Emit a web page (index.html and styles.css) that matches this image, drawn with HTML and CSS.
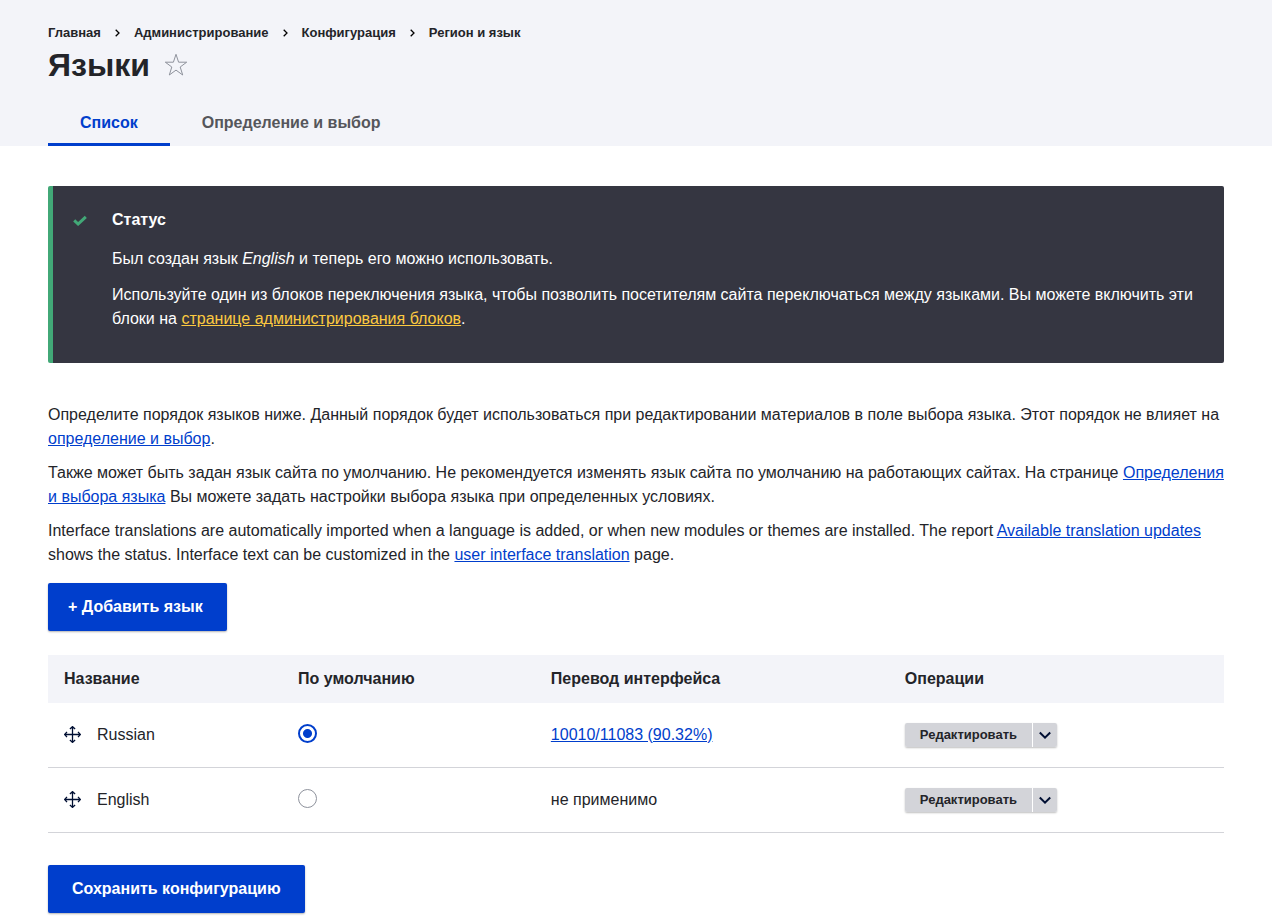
FILE: index.html
```html
<!DOCTYPE html>
<html lang="ru">
<head>
<meta charset="utf-8">
<meta name="viewport" content="width=device-width, initial-scale=1">
<title>Языки</title>
<link rel="stylesheet" href="styles.css">
</head>
<body>
<svg class="sprite" aria-hidden="true">
  <symbol id="icon-move" viewBox="0 0 17 17"><path d="M8.5 1V16M1 8.5H16M5.9 3 8.5.6 11.1 3M5.9 14 8.5 16.4 11.1 14M3 5.9.6 8.5 3 11.1M14 5.9 16.4 8.5 14 11.1"/></symbol>
  <symbol id="icon-down" viewBox="0 0 14 9"><path d="M1.8 1.5 7 6.7 12.2 1.5"/></symbol>
  <symbol id="icon-next" viewBox="0 0 5 8"><path d="M.7.7 4 4 .7 7.3"/></symbol>
</svg>
<header class="page-header">
  <nav aria-label="Строка навигации">
    <ol class="breadcrumb">
      <li><a href="#">Главная</a></li>
      <li><svg class="breadcrumb-arrow" aria-hidden="true"><use href="#icon-next"/></svg><a href="#">Администрирование</a></li>
      <li><svg class="breadcrumb-arrow" aria-hidden="true"><use href="#icon-next"/></svg><a href="#">Конфигурация</a></li>
      <li><svg class="breadcrumb-arrow" aria-hidden="true"><use href="#icon-next"/></svg><a href="#">Регион и язык</a></li>
    </ol>
  </nav>
  <div class="title-row">
    <h1>Языки</h1>
    <a class="shortcut" href="#" aria-label="Добавить в ярлыки"><svg viewBox="0 0 24 24"><path d="M12 1.3 14.6 9.2H22.7L16.2 14 18.7 22 12 17.1 5.3 22 7.8 14 1.3 9.2H9.4Z"/></svg></a>
  </div>
  <nav class="tabs" aria-label="Вкладки">
    <a class="tab tab-active" href="#" aria-current="page">Список</a>
    <a class="tab" href="#">Определение и выбор</a>
  </nav>
</header>
<main class="content">
  <section class="message" role="status">
    <svg class="message-icon" viewBox="0 0 14 11" aria-hidden="true"><path d="M1.2 5.4 5.1 9 12.8 1.8"/></svg>
    <div class="message-body">
      <h2>Статус</h2>
      <p>Был создан язык <em>English</em> и теперь его можно использовать.</p>
      <p>Используйте один из блоков переключения языка, чтобы позволить посетителям сайта переключаться между языками. Вы можете включить эти блоки на <a href="#">странице администрирования блоков</a>.</p>
    </div>
  </section>
  <div class="help">
    <p>Определите порядок языков ниже. Данный порядок будет использоваться при редактировании материалов в поле выбора языка. Этот порядок не влияет на <a href="#">определение и выбор</a>.</p>
    <p>Также может быть задан язык сайта по умолчанию. Не рекомендуется изменять язык сайта по умолчанию на работающих сайтах. На странице <a href="#">Определения и выбора языка</a> Вы можете задать настройки выбора языка при определенных условиях.</p>
    <p>Interface translations are automatically imported when a language is added, or when new modules or themes are installed. The report <a href="#">Available translation updates</a> shows the status. Interface text can be customized in the <a href="#">user interface translation</a> page.</p>
  </div>
  <a class="button button-add" href="#">+ Добавить язык</a>
  <form>
    <table class="languages">
      <colgroup><col class="col-name"><col class="col-default"><col class="col-translation"><col></colgroup>
      <thead>
        <tr><th scope="col">Название</th><th scope="col">По умолчанию</th><th scope="col">Перевод интерфейса</th><th scope="col">Операции</th></tr>
      </thead>
      <tbody>
        <tr>
          <td><div class="name"><a class="move" href="#" aria-label="Переместить"><svg><use href="#icon-move"/></svg></a><label for="default-ru">Russian</label></div></td>
          <td><input class="radio" type="radio" name="default" id="default-ru" checked></td>
          <td><a href="#">10010/11083 (90.32%)</a></td>
          <td><div class="dropbutton"><a class="dropbutton-action" href="#">Редактировать</a><button class="dropbutton-toggle" type="button" aria-label="Другие действия"><svg><use href="#icon-down"/></svg></button></div></td>
        </tr>
        <tr>
          <td><div class="name"><a class="move" href="#" aria-label="Переместить"><svg><use href="#icon-move"/></svg></a><label for="default-en">English</label></div></td>
          <td><input class="radio" type="radio" name="default" id="default-en"></td>
          <td>не применимо</td>
          <td><div class="dropbutton"><a class="dropbutton-action" href="#">Редактировать</a><button class="dropbutton-toggle" type="button" aria-label="Другие действия"><svg><use href="#icon-down"/></svg></button></div></td>
        </tr>
      </tbody>
    </table>
    <button class="button" type="submit">Сохранить конфигурацию</button>
  </form>
</main>
</body>
</html>
```
FILE: styles.css
```css
:root {
  --blue: #003ecc;
  --text: #232429;
  --pale: #f3f4f9;
  --navy: #000f33;
}
* { box-sizing: border-box; }
body {
  margin: 0;
  background: #fff;
  color: var(--text);
  font: 16px/24px "Liberation Sans", Arial, sans-serif;
}
a { color: var(--blue); }
h1, h2, p { margin: 0; }
svg { display: block; fill: none; stroke: currentColor; }
.sprite { display: none; }

.page-header { padding: 24px 48px 0; background: var(--pale); }
.breadcrumb {
  display: flex;
  flex-wrap: wrap;
  margin: 0;
  padding: 0;
  list-style: none;
  font-size: 13px;
  font-weight: 700;
  line-height: 18px;
}
.breadcrumb li { display: flex; align-items: center; }
.breadcrumb a { color: inherit; text-decoration: none; }
.breadcrumb-arrow { width: 5px; height: 8px; margin: 0 14px; color: #000; stroke-width: 1.3; }
.title-row { display: flex; align-items: center; gap: 14px; padding: 2px 0 13px; }
.title-row h1 { font-size: 32px; line-height: 42px; }
.shortcut { color: #8e929c; }
.shortcut svg { width: 24px; height: 24px; stroke-width: 1; }
.tabs { display: flex; }
.tab {
  padding: 12px 32px 8px;
  border-bottom: 3px solid transparent;
  color: #55565b;
  font-weight: 700;
  text-decoration: none;
}
.tab-active { border-color: var(--blue); color: var(--blue); }

.content { padding: 40px 48px 3px; }
.message {
  display: flex;
  gap: 25px;
  padding: 22px 24px 32px 20px;
  border-left: 5px solid #42a877;
  border-radius: 2px;
  background: #353641;
  color: #fff;
}
.message-icon { flex: none; width: 14px; height: 11px; margin-top: 7px; color: #42a877; stroke-width: 3; }
.message-body h2 { margin-bottom: 15px; font-size: 16px; line-height: 24px; }
.message-body p + p { margin-top: 12px; }
.message-body a { color: #fdca40; }

.help { display: grid; gap: 10px; margin: 40px 0 16px; }

.button {
  display: inline-block;
  padding: 12px 24px;
  border: 0;
  border-radius: 2px;
  background: var(--blue);
  box-shadow: 0 1px 2px rgba(0, 0, 0, .3);
  color: #fff;
  font: 700 16px/24px "Liberation Sans", Arial, sans-serif;
  text-decoration: none;
  vertical-align: top;
}
.button-add { padding-left: 20px; }

.languages {
  width: 100%;
  margin: 24px 0 32px;
  border-collapse: separate;
  border-spacing: 0;
  table-layout: fixed;
}
.col-name { width: 19.9%; }
.col-default { width: 21.5%; }
.col-translation { width: 30.1%; }
.languages th { height: 48px; padding: 0 16px; background: var(--pale); text-align: left; }
.languages td { height: 65px; padding: 0 16px; border-bottom: 1px solid #d3d4d9; }
.name { display: flex; align-items: center; gap: 16px; }
.move { padding-bottom: 2px; color: var(--navy); }
.move svg { width: 17px; height: 17px; stroke-width: 1.3; }
.radio {
  display: block;
  appearance: none;
  width: 19px;
  height: 19px;
  margin: 0 0 3px;
  border: 1px solid #8e929c;
  border-radius: 50%;
  background: #fff;
}
.radio:checked {
  border: 2px solid var(--blue);
  background: radial-gradient(circle, var(--blue) 4px, #fff 5px);
}
.dropbutton { display: inline-flex; vertical-align: middle; gap: 1px; height: 24px; border-radius: 2px; box-shadow: 0 1px 2px rgba(0, 0, 0, .25); }
.dropbutton-action, .dropbutton-toggle { border: 0; background: #d3d4d9; }
.dropbutton-action {
  padding: 0 15px;
  border-radius: 2px 0 0 2px;
  color: var(--text);
  font-size: 13px;
  font-weight: 700;
  line-height: 24px;
  text-decoration: none;
}
.dropbutton-toggle { display: grid; place-items: center; width: 24px; padding: 0; border-radius: 0 2px 2px 0; color: var(--navy); }
.dropbutton-toggle svg { width: 14px; height: 9px; stroke-width: 2; }
```
